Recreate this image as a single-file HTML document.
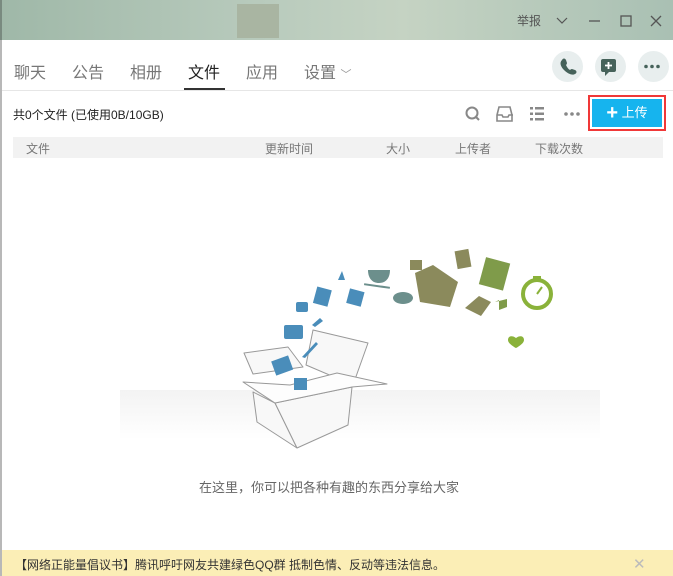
<!DOCTYPE html>
<html><head><meta charset="utf-8"><style>
*{margin:0;padding:0;box-sizing:border-box}
body{width:673px;height:576px;overflow:hidden;background:#fff;font-family:"Liberation Sans","Noto Sans CJK SC",sans-serif;position:relative}
.hdr{position:absolute;left:0;top:0;width:673px;height:40px;background:linear-gradient(90deg,#9fb8a8,#b9cbbd 40%,#c5d3c3 60%,#a9c0b3);}
.abs{position:absolute}
.tab{position:absolute;top:59px;font-size:16px;color:#777}
.circ{position:absolute;top:51px;width:31px;height:31px;border-radius:50%;background:#e8eeee}
.th{position:absolute;top:140px;font-size:12px;color:#777}
</style></head><body>
<div class="hdr"></div>
<div class="abs" style="left:237px;top:4px;width:42px;height:34px;background:#a9b5a2"></div>
<div class="abs" style="left:0;top:0;width:2px;height:576px;background:#333;opacity:.35"></div>
<div class="abs" style="left:517px;top:12px;font-size:12px;color:#555">举报</div>
<svg class="abs" style="left:555px;top:14px" width="110" height="14"><path d="M2 4l5 5 5-5" stroke="#555" fill="none" stroke-width="1.2"/><path d="M34 7h11" stroke="#555" stroke-width="1.3"/><rect x="66" y="2" width="10" height="10" stroke="#555" fill="none" stroke-width="1.3"/><path d="M96 2l10 10M106 2l-10 10" stroke="#555" stroke-width="1.3"/></svg>
<div class="tab" style="left:14px">聊天</div>
<div class="tab" style="left:72px">公告</div>
<div class="tab" style="left:130px">相册</div>
<div class="tab" style="left:188px;color:#222">文件</div>
<div class="tab" style="left:246px">应用</div>
<div class="tab" style="left:304px">设置 <span style="font-size:11px;color:#999">﹀</span></div>
<div class="abs" style="left:184px;top:88px;width:41px;height:2px;background:#333"></div>
<div class="abs" style="left:2px;top:90px;width:671px;height:1px;background:#e6e6e6"></div>
<div class="circ" style="left:552px"></div><div class="circ" style="left:595px"></div><div class="circ" style="left:638px"></div>
<svg class="abs" style="left:552px;top:51px" width="120" height="31">
<path d="M10 9c1-2 3-2 4 0l1 3c0 1-1 2-1 2 1 2 2 4 4 5 0 0 1-1 2-1l3 1c2 1 2 3 0 4-3 2-8-1-11-4s-5-7-2-10z" fill="#46625a"/>
<rect x="49" y="8" width="15" height="13" rx="2" fill="#46625a"/><path d="M53 21l0 4 4-4z" fill="#46625a"/><path d="M56.5 11v7M53 14.5h7" stroke="#fff" stroke-width="1.8"/>
<circle cx="94" cy="15.5" r="1.8" fill="#46625a"/><circle cx="100" cy="15.5" r="1.8" fill="#46625a"/><circle cx="106" cy="15.5" r="1.8" fill="#46625a"/>
</svg>
<div class="abs" style="left:13px;top:106px;font-size:12px;color:#222">共0个文件 (已使用0B/10GB)</div>
<svg class="abs" style="left:462px;top:104px" width="125" height="20">
<circle cx="10" cy="9" r="5.5" stroke="#888" stroke-width="2" fill="none"/><path d="M14 13l3 3" stroke="#888" stroke-width="2"/>
<path d="M37 3h11l2 8v6h-15v-6z M35 11h5l1 2h5l1-2h4" stroke="#888" stroke-width="1.6" fill="none"/>
<g fill="#888"><rect x="68" y="3" width="3" height="2.5"/><rect x="73" y="3" width="9" height="2.5"/><rect x="68" y="8.5" width="3" height="2.5"/><rect x="73" y="8.5" width="9" height="2.5"/><rect x="68" y="14" width="3" height="2.5"/><rect x="73" y="14" width="9" height="2.5"/>
<circle cx="104" cy="10" r="1.8"/><circle cx="110" cy="10" r="1.8"/><circle cx="116" cy="10" r="1.8"/></g></svg>
<div class="abs" style="left:588px;top:95px;width:78px;height:36px;border:2px solid #f03838"></div>
<div class="abs" style="left:592px;top:99px;width:70px;height:28px;background:#16b4ee;color:#fff;font-size:13px;line-height:28px;text-align:center"><span style="font-size:20px;vertical-align:-2px;font-weight:bold">+</span> 上传</div>
<div class="abs" style="left:13px;top:137px;width:650px;height:21px;background:#f2f2f2"></div>
<div class="th" style="left:26px">文件</div><div class="th" style="left:265px">更新时间</div><div class="th" style="left:386px">大小</div><div class="th" style="left:455px">上传者</div><div class="th" style="left:535px">下载次数</div>
<div class="abs" style="left:120px;top:390px;width:480px;height:50px;background:linear-gradient(180deg,#f3f3f3,#fff)"></div>
<svg class="abs" style="left:220px;top:230px" width="350" height="230">
<g stroke="#999" stroke-width="1" fill="#f8f8f8" stroke-linejoin="round">
<path d="M93 100l55 13-15 42-47-20z"/>
<path d="M24 123l44-6 15 20-50 7z"/>
<path d="M33 162l22 11 22 45-40-26z"/>
<path d="M55 173l77-16-4 38-51 23z"/>
<path d="M23 152l32 21 77-16 35-3-50-11-47 12z" fill="#fdfdfd"/>
</g>
<g fill="#4a8dba"><rect x="64" y="95" width="19" height="14" rx="2"/><rect x="53" y="128" width="18" height="15" transform="rotate(-20 62 135)"/><rect x="74" y="148" width="13" height="12"/><path d="M82 127l14-15 2 2-13 14z"/><rect x="76" y="72" width="12" height="10" rx="2"/><rect x="95" y="58" width="15" height="17" transform="rotate(15 102 66)"/><rect x="128" y="60" width="15" height="15" transform="rotate(15 135 67)"/><path d="M118 50l4-9 3 9z"/><path d="M92 95l8-7 3 3-8 6z"/></g>
<g fill="#6c8f8c"><path d="M148 40h22c0 8-4 13-11 13s-11-5-11-13z"/><rect x="144" y="55" width="26" height="2" transform="rotate(8 157 56)"/><ellipse cx="183" cy="68" rx="10" ry="6"/></g>
<g fill="#8b8a5c"><path d="M195 43l18-8 25 17-8 25-30-5z"/><rect x="190" y="30" width="12" height="10"/><rect x="236" y="20" width="14" height="18" transform="rotate(-10 243 29)"/><path d="M245 78l14-12 12 6-10 14z"/></g>
<g fill="#7f9b4a"><rect x="262" y="30" width="25" height="28" transform="rotate(15 275 44)"/><path d="M275 72l4-2v10l8-3v-8"/></g>
<circle cx="317" cy="64" r="14" fill="none" stroke="#8ab23a" stroke-width="4"/><rect x="313" y="46" width="8" height="4" fill="#8ab23a"/><path d="M317 64l5-7" stroke="#8ab23a" stroke-width="2"/>
<path d="M296 108c-4-3-8-2-8 2 0 4 8 8 8 8s8-4 8-8c0-4-4-5-8-2z" fill="#8ab23a"/>
</svg>
<div class="abs" style="left:199px;top:477px;font-size:13px;color:#666">在这里，你可以把各种有趣的东西分享给大家</div>
<div class="abs" style="left:2px;top:550px;width:671px;height:26px;background:#fbeeb6"></div>
<div class="abs" style="left:15px;top:556px;font-size:12px;color:#333">【网络正能量倡议书】腾讯呼吁网友共建绿色QQ群 抵制色情、反动等违法信息。</div>
<div class="abs" style="left:633px;top:555px;font-size:15px;color:#bbb">✕</div>
</body></html>
